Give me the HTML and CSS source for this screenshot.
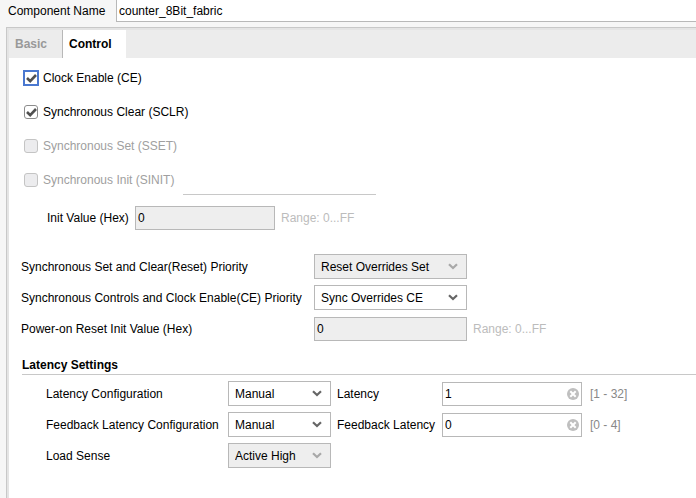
FILE: index.html
```html
<!DOCTYPE html>
<html lang="en">
<head>
<meta charset="utf-8">
<title>Component configuration</title>
<link rel="stylesheet" href="styles.css">
</head>
<body>
<svg class="defs" aria-hidden="true">
  <symbol id="chevron" viewBox="0 0 10 7"><path d="M1 1.2 L5 5 L9 1.2" fill="none" stroke="currentColor" stroke-width="2.2"/></symbol>
  <symbol id="clear" viewBox="0 0 12 12"><circle cx="6" cy="6" r="6" fill="#bfbfbf"/><path d="M3.3 3.3 L8.7 8.7 M8.7 3.3 L3.3 8.7" stroke="#fff" stroke-width="2"/></symbol>
  <symbol id="tick" viewBox="0 0 11 11"><path d="M1 5 L4.2 8.2 L10 2" fill="none" stroke="currentColor" stroke-width="2.6"/></symbol>
</svg>

<header class="name-row">
  <label for="name">Component Name</label>
  <input id="name" class="name" type="text" value="counter_8Bit_fabric">
</header>

<main class="panel">
  <nav class="tabs" role="tablist">
    <button class="tab" type="button" role="tab" aria-selected="false">Basic</button>
    <button class="tab active" type="button" role="tab" aria-selected="true">Control</button>
  </nav>

  <form class="content">
    <div class="checks">
      <div class="check-row">
        <span class="check focused"><input id="ce" type="checkbox" checked><svg><use href="#tick"/></svg></span>
        <label for="ce">Clock Enable (CE)</label>
      </div>
      <div class="check-row">
        <span class="check"><input id="sclr" type="checkbox" checked><svg><use href="#tick"/></svg></span>
        <label for="sclr">Synchronous Clear (SCLR)</label>
      </div>
      <div class="check-row disabled">
        <span class="check"><input id="sset" type="checkbox" disabled></span>
        <label for="sset">Synchronous Set (SSET)</label>
      </div>
      <div class="check-row disabled">
        <span class="check"><input id="sinit" type="checkbox" disabled></span>
        <label for="sinit">Synchronous Init (SINIT)</label>
        <span class="rule"></span>
      </div>
    </div>

    <div class="init-row">
      <label for="init">Init Value (Hex)</label>
      <input id="init" class="field" type="text" value="0" disabled>
      <span class="range">Range: 0...FF</span>
    </div>

    <div class="priority">
      <label for="setclear">Synchronous Set and Clear(Reset) Priority</label>
      <span class="select"><select id="setclear" disabled><option>Reset Overrides Set</option></select><svg><use href="#chevron"/></svg></span>
      <span></span>
      <label for="ctrl">Synchronous Controls and Clock Enable(CE) Priority</label>
      <span class="select"><select id="ctrl"><option>Sync Overrides CE</option></select><svg><use href="#chevron"/></svg></span>
      <span></span>
      <label for="por">Power-on Reset Init Value (Hex)</label>
      <input id="por" class="field" type="text" value="0" disabled>
      <span class="range">Range: 0...FF</span>
    </div>

    <h2 class="heading">Latency Settings</h2>
    <div class="latency">
      <label for="latconf">Latency Configuration</label>
      <span class="select"><select id="latconf"><option>Manual</option></select><svg><use href="#chevron"/></svg></span>
      <label for="lat">Latency</label>
      <span class="clearable"><input id="lat" class="field" type="text" value="1"><button type="button" aria-label="Clear"><svg><use href="#clear"/></svg></button></span>
      <span class="limits">[1 - 32]</span>
      <label for="fbconf">Feedback Latency Configuration</label>
      <span class="select"><select id="fbconf"><option>Manual</option></select><svg><use href="#chevron"/></svg></span>
      <label for="fb">Feedback Latency</label>
      <span class="clearable"><input id="fb" class="field" type="text" value="0"><button type="button" aria-label="Clear"><svg><use href="#clear"/></svg></button></span>
      <span class="limits">[0 - 4]</span>
      <label for="sense">Load Sense</label>
      <span class="select"><select id="sense" disabled><option>Active High</option></select><svg><use href="#chevron"/></svg></span>
    </div>
  </form>
</main>
</body>
</html>
```
FILE: styles.css
```css
* {
  box-sizing: border-box;
}

body {
  margin: 0;
  min-height: 100vh;
  display: flex;
  flex-direction: column;
  background: #f6f6f6;
  color: #000;
  font: 12px/16px "Liberation Sans", Arial, sans-serif;
  white-space: nowrap;
}

input, select, button {
  margin: 0;
  font: inherit;
  color: inherit;
  border-radius: 0;
  outline: none;
}

.defs {
  position: absolute;
  width: 0;
  height: 0;
}

.name-row {
  display: grid;
  grid-template-columns: 108px 1fr;
  align-items: center;
  padding-left: 8px;
}

.name {
  width: 100%;
  height: 22px;
  padding: 0 2px;
  border: solid #b8b8b8;
  border-width: 0 0 1px 1px;
  background: #fff;
}

.panel {
  flex: 1;
  display: flex;
  flex-direction: column;
  margin: 5px 0 0 6px;
  border: solid #c8c8c8;
  border-width: 1px 0 0 1px;
  background: #fff;
}

.tabs {
  display: flex;
  height: 30px;
  border: solid #e4e4e4;
  border-width: 2px 0 0 2px;
  background: #ececec;
}

.tab {
  padding: 0 15px 0 6px;
  border: 0;
  background: none;
  color: #999;
  font-weight: bold;
}

.tab.active {
  padding: 0 14px 0 6px;
  border-left: 1px solid #b8b8b8;
  background: #fff;
  color: #000;
}

.content {
  flex: 1;
  padding: 3px 0 24px 12px;
  border-left: 2px solid #e4e4e4;
}

.checks {
  padding-left: 2px;
}

.check-row {
  display: flex;
  align-items: center;
  gap: 4px;
  height: 34px;
}

.disabled {
  color: #a0a0a0;
}

.check {
  display: grid;
  place-items: center;
  width: 16px;
  height: 16px;
}

.check > * {
  grid-area: 1 / 1;
}

.check input {
  appearance: none;
  width: 14px;
  height: 14px;
  border: 1px solid #8c8c8c;
  border-radius: 3px;
  background: #fff;
}

.check.focused input {
  width: 16px;
  height: 16px;
  border: 2px solid #4a78d0;
  border-radius: 0;
}

.disabled .check input {
  border-color: #c4c4c4;
  background: #ececee;
}

.check svg {
  width: 11px;
  height: 11px;
  color: #505050;
  pointer-events: none;
}

.rule {
  align-self: flex-end;
  width: 193px;
  margin: 0 0 2px 5px;
  border-bottom: 1px solid #c8c8c8;
}

.init-row {
  display: grid;
  grid-template-columns: 82px 140px auto;
  align-items: center;
  column-gap: 6px;
  margin-top: 9px;
  padding-left: 26px;
}

.field {
  width: 100%;
  height: 24px;
  padding: 0 2px;
  border: 1px solid #b8b8b8;
  background: #fff;
}

.field:disabled {
  background: #eee;
}

.range {
  color: #bcbcbc;
}

.priority {
  display: grid;
  grid-template-columns: 287px 153px auto;
  grid-auto-rows: 25px;
  align-items: center;
  gap: 6px;
  margin-top: 24px;
}

.select {
  display: grid;
  align-items: center;
}

.select > * {
  grid-area: 1 / 1;
}

.select select {
  appearance: none;
  width: 100%;
  height: 25px;
  padding: 0 6px;
  border: 1px solid #b8b8b8;
  background: #fff;
}

.select select:disabled {
  background: #eee;
  color: #000;
  opacity: 1;
}

.select svg {
  justify-self: end;
  width: 10px;
  height: 7px;
  margin-right: 9px;
  color: #666;
  pointer-events: none;
}

.select select:disabled + svg {
  color: #a8a8a8;
}

.heading {
  margin: 16px 0 0 1px;
  padding-bottom: 1px;
  border-bottom: 1px solid #c8c8c8;
  font-size: 12px;
  line-height: 16px;
}

.latency {
  display: grid;
  grid-template-columns: 176px 103px 99px 140px auto;
  grid-auto-rows: 25px;
  align-items: center;
  gap: 6px;
  margin-top: 6px;
  padding-left: 25px;
}

.clearable {
  display: grid;
  align-items: center;
}

.clearable > * {
  grid-area: 1 / 1;
}

.clearable button {
  justify-self: end;
  width: 12px;
  height: 12px;
  margin-right: 3px;
  padding: 0;
  border: 0;
  background: none;
}

.clearable svg {
  display: block;
  width: 12px;
  height: 12px;
}

.limits {
  padding-left: 2px;
  color: #888;
}
```
